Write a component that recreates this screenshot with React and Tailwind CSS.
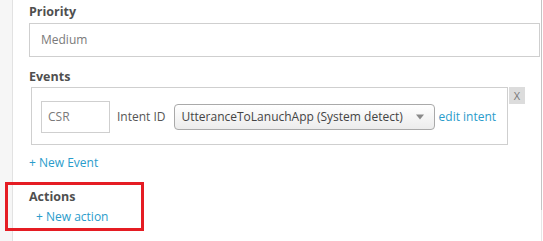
import React from "react";

export default function App() {
  return (
    <div
      className="w-[543px] h-[241px] flex bg-white overflow-hidden relative"
      style={{ fontFamily: '"Open Sans", "DejaVu Sans", sans-serif' }}
    >
      <div className="w-[13px] h-full bg-[#f6f6f6] border-r border-[#e2e2e2]" />
      <div className="w-[528px] h-full pl-[16px] pt-[3px]">
        <div className="text-[12.5px] leading-[18px] font-bold text-[#4f4f4f]">Priority</div>
        <div className="mt-[2px] w-[511px] h-[34px] border border-[#cfcfcf] flex items-center pl-[11px] text-[12px] text-[#7a7a7a]">
          Medium
        </div>
        <div className="mt-[11px] text-[12.5px] leading-[18px] font-bold text-[#4f4f4f]">Events</div>
        <div className="mt-[1px] flex items-start">
          <div className="ml-[2px] w-[477px] h-[58px] border border-[#cfcfcf] flex items-start pl-[9px] pt-[13px]">
            <div className="flex items-center">
              <div className="w-[69px] h-[32px] border border-[#cfcfcf] flex items-center pl-[6px] text-[12px] text-[#7a7a7a]">
                CSR
              </div>
              <span className="ml-[7px] text-[12px] text-[#555]">Intent ID</span>
              <div className="ml-[8px] w-[261px] h-[26px] border border-[#a9a9a9] rounded-[4px] bg-gradient-to-b from-white to-[#ececec] flex items-center justify-between pl-[7px] pr-[10px] text-[12px] text-[#444]">
                <span className="whitespace-nowrap">UtteranceToLanuchApp (System detect)</span>
                <svg width="8" height="6" viewBox="0 0 8 6">
                  <path d="M0 0.5 L8 0.5 L4 5.5 Z" fill="#8a8a8a" />
                </svg>
              </div>
              <span className="ml-[4px] text-[12px] text-[#2a9ccb] whitespace-nowrap">edit intent</span>
            </div>
          </div>
          <div className="ml-[1px] w-[16px] h-[17px] bg-[#dcdcdc] flex items-center justify-center text-[11px] leading-none text-[#777]">
            X
          </div>
        </div>
        <div className="mt-[9px] text-[12px] leading-[18px] text-[#2a9ccb]">+ New Event</div>
        <div className="mt-[16px] text-[12.5px] leading-[18px] font-bold text-[#4f4f4f]">Actions</div>
        <div className="mt-[2px] ml-[7px] text-[12px] leading-[18px] text-[#2a9ccb]">+ New action</div>
      </div>
      <div className="w-[2px] h-full flex flex-col">
        <div className="w-[1px] h-[210px] bg-[#c4c4c4]" />
        <div className="w-[1px] flex-1 bg-[#e6e6e6]" />
      </div>
      <div className="absolute left-[5px] top-[182px] w-[139px] h-[49px] border-[3px] border-[#e51c23]" />
    </div>
  );
}
